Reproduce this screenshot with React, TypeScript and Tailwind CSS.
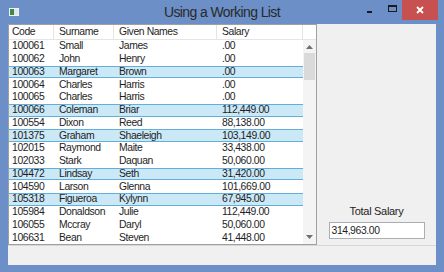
import React from "react";

type Row = { code: string; surname: string; given: string; salary: string; hl?: boolean };

const rows: Row[] = [
  { code: "100061", surname: "Small", given: "James", salary: ".00" },
  { code: "100062", surname: "John", given: "Henry", salary: ".00" },
  { code: "100063", surname: "Margaret", given: "Brown", salary: ".00", hl: true },
  { code: "100064", surname: "Charles", given: "Harris", salary: ".00" },
  { code: "100065", surname: "Charles", given: "Harris", salary: ".00" },
  { code: "100066", surname: "Coleman", given: "Briar", salary: "112,449.00", hl: true },
  { code: "100554", surname: "Dixon", given: "Reed", salary: "88,138.00" },
  { code: "101375", surname: "Graham", given: "Shaeleigh", salary: "103,149.00", hl: true },
  { code: "102015", surname: "Raymond", given: "Maite", salary: "33,438.00" },
  { code: "102033", surname: "Stark", given: "Daquan", salary: "50,060.00" },
  { code: "104472", surname: "Lindsay", given: "Seth", salary: "31,420.00", hl: true },
  { code: "104590", surname: "Larson", given: "Glenna", salary: "101,669.00" },
  { code: "105318", surname: "Figueroa", given: "Kylynn", salary: "67,945.00", hl: true },
  { code: "105984", surname: "Donaldson", given: "Julie", salary: "112,449.00" },
  { code: "106055", surname: "Mccray", given: "Daryl", salary: "50,060.00" },
  { code: "106631", surname: "Bean", given: "Steven", salary: "41,448.00" },
];

const font = { fontFamily: '"Liberation Sans", Arial, sans-serif' };

export default function App() {
  return (
    <div
      className="w-[444px] h-[272px] bg-[#6b8fc6] flex flex-col overflow-hidden text-[#1e1e1e]"
      style={font}
    >
      {/* Title bar */}
      <div className="h-[24px] relative flex items-start justify-center">
        <svg className="absolute left-[9px] top-[8px]" width="10" height="8" viewBox="0 0 10 8">
          <rect x="0" y="0" width="10" height="8" fill="#f2f2f2" />
          <rect x="1" y="1" width="4" height="6" fill="#3c8a4a" />
          <rect x="5" y="1" width="4" height="6" fill="#dfe6ee" />
        </svg>
        <div className="pt-[4px] text-[14px] leading-[16px] tracking-[-0.6px] text-[#2a2a2a]">
          Using a Working List
        </div>
        <div className="absolute left-[367px] top-[11px] w-[5px] h-[2px] bg-[#1a1a1a]" />
        <div className="absolute left-[388px] top-[5px] w-[9px] h-[7px] border border-[#1a1a1a] border-t-2" />
        <div className="absolute left-[402px] top-0 w-[36px] h-[20px] bg-[#c75050] flex items-center justify-center">
          <svg width="8" height="8" viewBox="0 0 8 8">
            <path d="M1 1 L7 7 M7 1 L1 7" stroke="#fff" strokeWidth="1.8" />
          </svg>
        </div>
      </div>

      {/* Client */}
      <div className="mx-[8px] mb-[7px] flex-1 bg-[#f0f0f0] flex flex-col">
        <div className="flex-1 flex">
          {/* List */}
          <div className="w-[309px] h-[221px] bg-white border border-[#a0a0a0] flex flex-col text-[10.4px] tracking-[-0.4px]">
            <div className="h-[15px] flex border-b border-[#e5e5e5] bg-white leading-[14px]">
              <div className="w-[45px] pl-[3px] border-r border-[#e5e5e5]">Code</div>
              <div className="w-[60px] pl-[5px] border-r border-[#e5e5e5]">Surname</div>
              <div className="w-[103px] pl-[5px] border-r border-[#e5e5e5]">Given Names</div>
              <div className="w-[86px] pl-[5px] border-r border-[#e5e5e5]">Salary</div>
              <div className="flex-1" />
            </div>
            <div className="flex-1 flex">
              <div className="w-[294px] flex flex-col">
                {rows.map((r) => (
                  <div
                    key={r.code}
                    className={
                      "h-[12.75px] flex items-center leading-[12px] " +
                      (r.hl ? "bg-[#cbe8f6] border-y border-[#62afdf]" : "")
                    }
                  >
                    <div className="w-[45px] pl-[3px]">{r.code}</div>
                    <div className="w-[60px] pl-[5px]">{r.surname}</div>
                    <div className="w-[103px] pl-[5px]">{r.given}</div>
                    <div className="w-[86px] pl-[5px]">{r.salary}</div>
                  </div>
                ))}
              </div>
              <div className="flex-1 bg-[#f4f4f4] flex flex-col items-center">
                <svg className="mt-[5px]" width="7" height="4" viewBox="0 0 7 4">
                  <path d="M0 4 L3.5 0 L7 4 Z" fill="#707070" />
                </svg>
                <div className="mt-[4px] w-[11px] h-[27px] bg-[#dadada]" />
                <div className="flex-1" />
                <svg className="mb-[5px]" width="7" height="4" viewBox="0 0 7 4">
                  <path d="M0 0 L3.5 4 L7 0 Z" fill="#707070" />
                </svg>
              </div>
            </div>
          </div>

          {/* Right panel */}
          <div className="flex-1 flex flex-col items-center justify-end pb-[6px]">
            <div className="text-[11px] leading-[13px] tracking-[-0.3px] mb-[4px]">Total Salary</div>
            <div className="w-[96px] h-[17px] bg-white border border-[#abadb3] text-[10.4px] leading-[15px] pl-[2px] tracking-[-0.4px]">
              314,963.00
            </div>
          </div>
        </div>
        <div className="h-[20px] border-t border-[#d7d7d7]" />
      </div>
    </div>
  );
}
